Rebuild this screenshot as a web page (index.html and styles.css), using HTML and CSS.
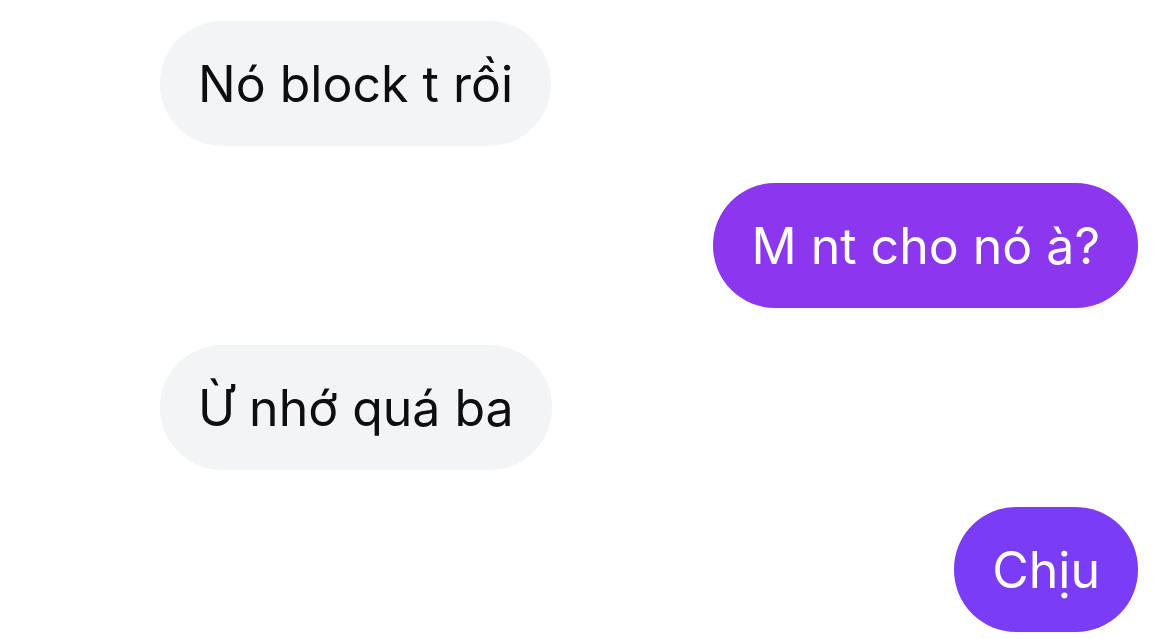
FILE: index.html
```html
<!DOCTYPE html>
<html lang="vi">
<head>
<meta charset="utf-8">
<link rel="stylesheet" href="styles.css">
</head>
<body>
<div class="thread">
  <div class="row row-in"><div class="bubble in">Nó block t rồi</div></div>
  <div class="row row-out"><div class="bubble out out-1">M nt cho nó à?</div></div>
  <div class="row row-in"><div class="bubble in">Ừ nhớ quá ba</div></div>
  <div class="row row-out"><div class="bubble out out-2">Chịu</div></div>
</div>
</body>
</html>
```
FILE: styles.css
```css
html, body {
  margin: 0;
  padding: 0;
  background: #ffffff;
}
.thread {
  display: flex;
  flex-direction: column;
  gap: 37px;
  padding: 21px 23px 0 160px;
  font-family: Inter, "Noto Sans", sans-serif;
}
.row {
  display: flex;
}
.row-in { justify-content: flex-start; }
.row-out { justify-content: flex-end; }
.bubble {
  height: 125px;
  box-sizing: border-box;
  display: flex;
  align-items: center;
  padding: 0 38px;
  border-radius: 62px;
  font-size: 50px;
  letter-spacing: 0;
  white-space: nowrap;
}
.in {
  background: #f3f4f6;
  color: #0d0d12;
}
.out {
  color: #ffffff;
}
.out-1 { background: #8b37ee; }
.out-2 { background: #7b3cf5; }
```
